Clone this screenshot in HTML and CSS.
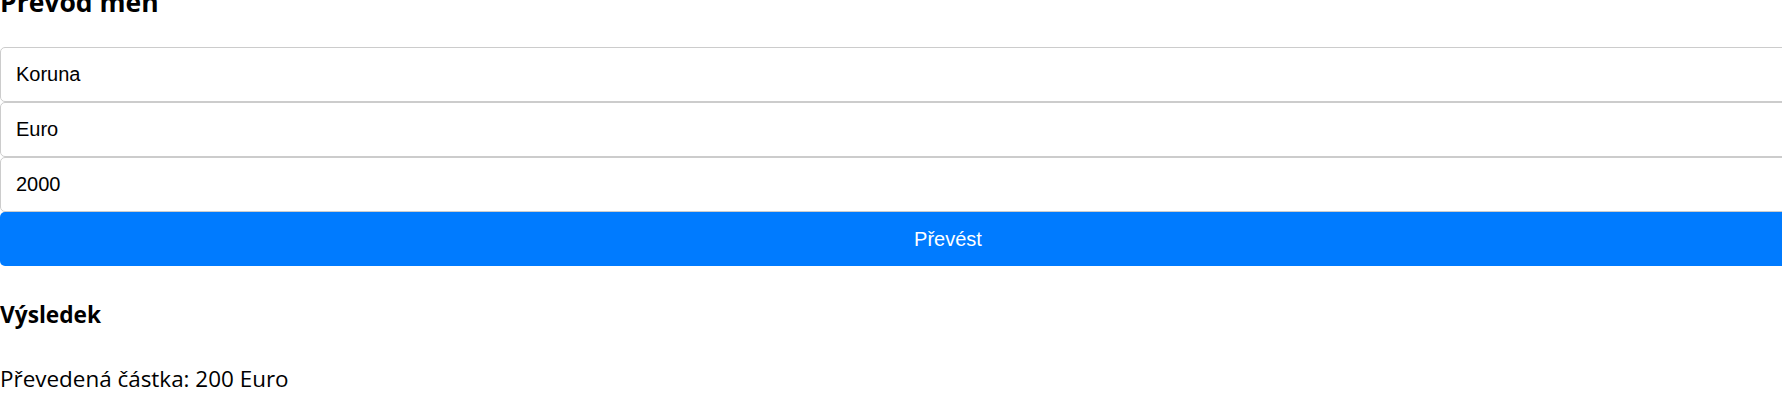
FILE: index.html
```html
<!DOCTYPE html>
<html lang="cs">
<head>
<meta charset="utf-8">
<title>Převod měn</title>
<link rel="stylesheet" href="styles.css">
</head>
<body>
<main class="converter">
  <h2 class="title">Převod měn</h2>
  <form class="form">
    <input class="field" type="text" value="Koruna">
    <input class="field" type="text" value="Euro">
    <input class="field" type="text" value="2000">
    <button class="submit" type="button">Převést</button>
  </form>
  <h3 class="result-title">Výsledek</h3>
  <p class="result">Převedená částka: 200 Euro</p>
</main>
</body>
</html>
```
FILE: styles.css
```css
html{overflow:hidden}
body{margin:0;background:#fff;color:#000;font-family:"Open Sans","Noto Sans",sans-serif}
.converter{width:1896px;display:flex;flex-direction:column;align-items:stretch}
.title{margin:-15px 0 28px;font-size:26.5px;line-height:34px;font-weight:700}
.form{display:flex;flex-direction:column;margin:0}
.field{box-sizing:border-box;height:55px;margin:0;padding:0 15px;border:1px solid #ccc;border-radius:5px;background:#fff;font-family:"Liberation Sans",Arial,sans-serif;font-size:20px;color:#000;outline:none}
.submit{box-sizing:border-box;height:54px;margin:0;border:0;border-radius:5px;background:#007bff;color:#fff;font-family:"Liberation Sans",Arial,sans-serif;font-size:20px;cursor:pointer}
.result-title{margin:34px 0 0;font-size:22.7px;line-height:30px;font-weight:700}
.result{margin:34px 0 0;font-size:22.45px;line-height:30px}
```
